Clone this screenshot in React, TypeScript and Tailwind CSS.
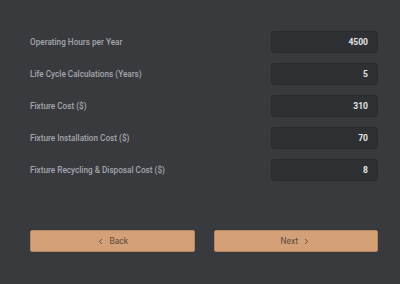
import { ChevronLeft, ChevronRight } from 'lucide-react'

const fields = [
  { label: 'Operating Hours per Year', value: '4500' },
  { label: 'Life Cycle Calculations (Years)', value: '5' },
  { label: 'Fixture Cost ($)', value: '310' },
  { label: 'Fixture Installation Cost ($)', value: '70' },
  { label: 'Fixture Recycling & Disposal Cost ($)', value: '8' },
]

export default function App() {
  return (
    <div className="w-[400px] h-[284px] bg-[#393a3e] pl-[30px] pr-[22px] pt-[31px] font-['Roboto',sans-serif]">
      <div className="flex flex-col gap-[10px]">
        {fields.map((f) => (
          <div key={f.label} className="flex items-center justify-between h-[22px]">
            <label className="text-[8.2px] font-medium text-[#a3a7ae]">{f.label}</label>
            <input
              readOnly
              value={f.value}
              className="w-[107px] h-[22px] rounded-[3px] bg-[#2f3034] border border-[#2a2b2f] px-[9px] text-right text-[8.5px] font-bold text-[#e4e5e7] outline-none"
            />
          </div>
        ))}
      </div>

      <div className="flex gap-[19px] mt-[49px]">
        <button className="flex-1 h-[22px] rounded-[2px] bg-[#d4a077] border border-[#b38560] flex items-center justify-center gap-[4px] text-[8.5px] text-[#5a4a3d]">
          <ChevronLeft size={9} strokeWidth={2.5} />
          Back
        </button>
        <button className="flex-1 h-[22px] rounded-[2px] bg-[#d4a077] border border-[#b38560] flex items-center justify-center gap-[4px] text-[8.5px] text-[#5a4a3d]">
          Next
          <ChevronRight size={9} strokeWidth={2.5} />
        </button>
      </div>
    </div>
  )
}
